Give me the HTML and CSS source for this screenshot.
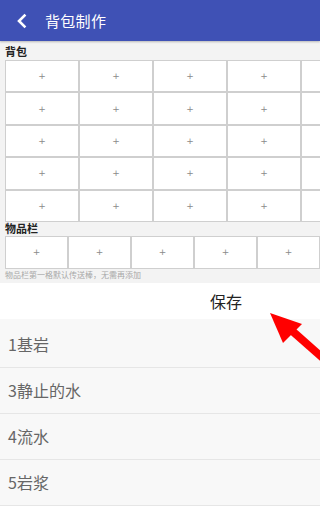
FILE: index.html
```html
<!DOCTYPE html>
<html lang="zh">
<head>
<meta charset="utf-8">
<link rel="stylesheet" href="styles.css">
</head>
<body>
<div class="app">
  <header class="topbar">
    <svg class="back" width="12" height="16" viewBox="0 0 12 16"><path d="M8.5 2.5 L3 8 L8.5 13.5" fill="none" stroke="#fff" stroke-width="2.6" stroke-linecap="square"/></svg>
    <span class="title">背包制作</span>
  </header>
  <div class="section-label">背包</div>
  <div class="bag-wrap">
    <div class="bag-grid">
      <div class="cell">+</div><div class="cell">+</div><div class="cell">+</div><div class="cell">+</div><div class="cell"></div>
      <div class="cell">+</div><div class="cell">+</div><div class="cell">+</div><div class="cell">+</div><div class="cell"></div>
      <div class="cell">+</div><div class="cell">+</div><div class="cell">+</div><div class="cell">+</div><div class="cell"></div>
      <div class="cell">+</div><div class="cell">+</div><div class="cell">+</div><div class="cell">+</div><div class="cell"></div>
      <div class="cell">+</div><div class="cell">+</div><div class="cell">+</div><div class="cell">+</div><div class="cell"></div>
    </div>
  </div>
  <div class="section-label second">物品栏</div>
  <div class="bag-wrap">
    <div class="item-grid">
      <div class="cell">+</div><div class="cell">+</div><div class="cell">+</div><div class="cell">+</div><div class="cell">+</div>
    </div>
  </div>
  <div class="note">物品栏第一格默认传送棒，无需再添加</div>
  <div class="save-row"><span class="save">保存</span></div>
  <ul class="list">
    <li>1基岩</li>
    <li>3静止的水</li>
    <li>4流水</li>
    <li>5岩浆</li>
  </ul>
  <svg class="arrow" width="60" height="60" viewBox="0 0 60 60">
    <path d="M22 19 L56 49" stroke="#f00" stroke-width="8" stroke-linecap="butt"/>
    <polygon points="2,3 34,14 15,33" fill="#f00"/>
  </svg>
</div>
</body>
</html>
```
FILE: styles.css
```css
* { box-sizing: border-box; margin: 0; padding: 0; }
html, body { width: 320px; height: 506px; overflow: hidden; }
body {
  font-family: "Noto Sans CJK SC", "Noto Sans", sans-serif;
  background: #f3f3f3;
}
.app { position: relative; width: 320px; height: 506px; overflow: hidden; }
.topbar {
  height: 41px;
  background: #3f51b5;
  display: flex;
  align-items: center;
  padding-left: 16px;
  box-shadow: 0 1px 2px rgba(0,0,0,0.25);
}
.back { display: block; margin-right: 17px; }
.title { color: #fff; font-size: 15px; letter-spacing: 0.3px; }
.section-label {
  font-size: 11px;
  font-weight: bold;
  color: #222;
  padding-left: 5px;
  height: 19px;
  line-height: 20px;
}
.section-label.second { height: 15px; line-height: 14px; margin-top: -1px; }
.bag-wrap { padding-left: 5px; overflow: hidden; }
.bag-grid {
  display: grid;
  grid-template-columns: repeat(5, 74px);
  grid-auto-rows: 32.4px;
  width: 370px;
}
.item-grid {
  display: grid;
  grid-template-columns: repeat(5, 63px);
  grid-auto-rows: 33px;
  width: 315px;
}
.cell {
  background: #fff;
  border: 1px solid #cfcfcf;
  display: flex;
  align-items: center;
  justify-content: center;
  font-size: 9px;
  color: #8a8a8a;
  font-family: "DejaVu Sans", sans-serif;
}
.note {
  font-size: 8px;
  color: #a8a8a8;
  padding-left: 5px;
  height: 14px;
  line-height: 12px;
}
.save-row {
  height: 36px;
  background: #fff;
  display: flex;
  align-items: center;
  justify-content: flex-end;
  padding-right: 78px;
}
.save { font-size: 16px; color: #222; }
.list { list-style: none; background: #f8f8f8; padding-top: 3px; }
.list li {
  height: 46px;
  border-bottom: 1px solid #e6e6e6;
  font-size: 16px;
  color: #666;
  padding-left: 8px;
  display: flex;
  align-items: center;
}
.arrow { position: absolute; left: 268px; top: 310px; }
```
